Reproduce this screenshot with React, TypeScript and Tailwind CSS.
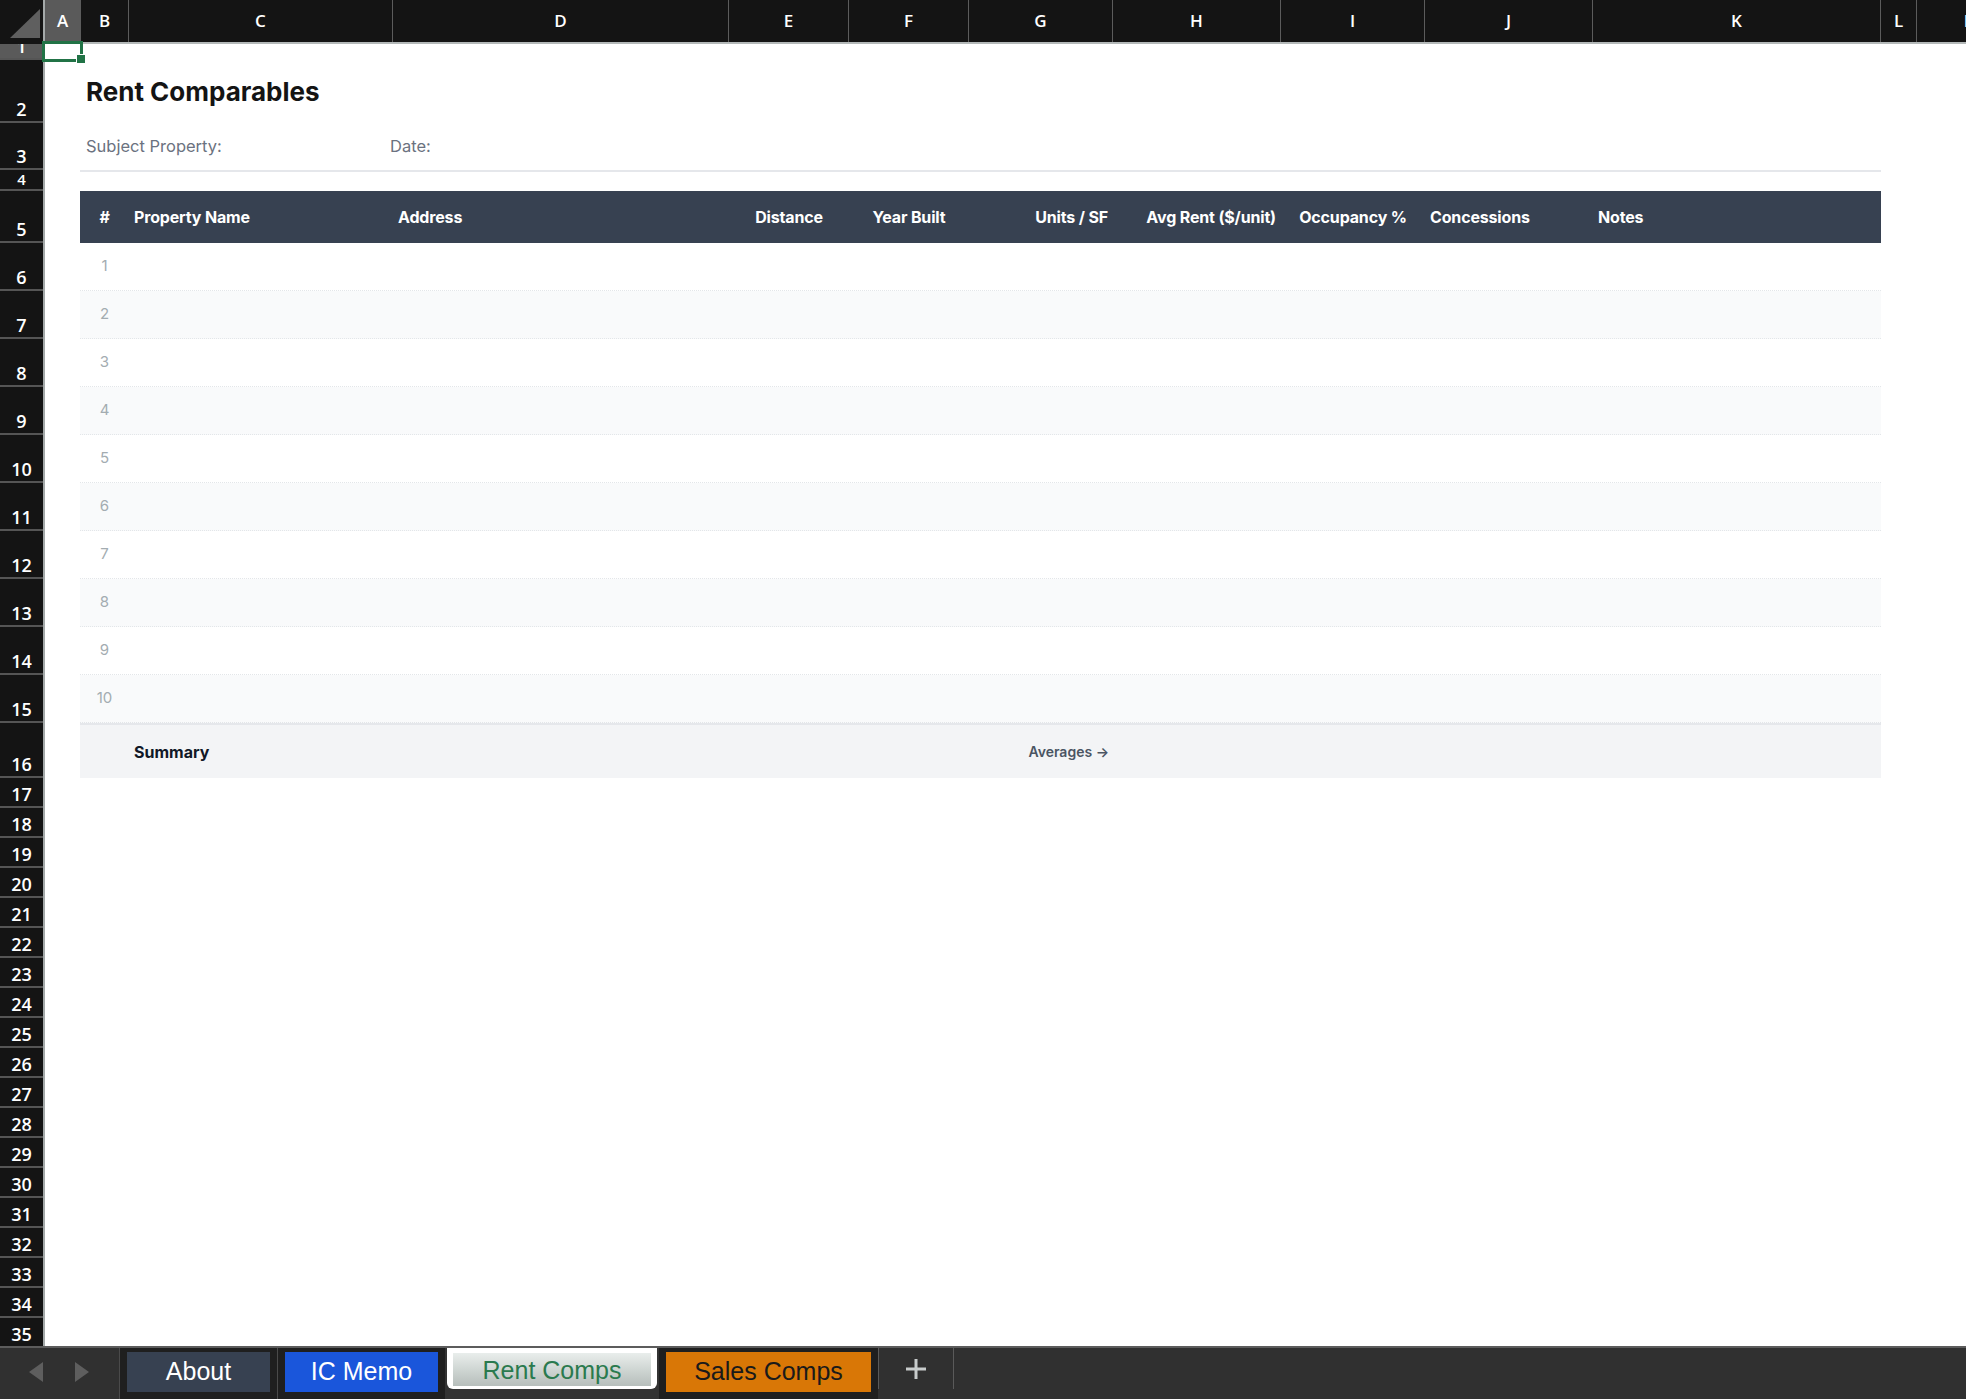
import React from "react";

const COLS = [
  { l: "A", w: "w-[36px]", on: true },
  { l: "B", w: "w-[48px]" },
  { l: "C", w: "w-[264px]" },
  { l: "D", w: "w-[336px]" },
  { l: "E", w: "w-[120px]" },
  { l: "F", w: "w-[120px]" },
  { l: "G", w: "w-[144px]" },
  { l: "H", w: "w-[168px]" },
  { l: "I", w: "w-[144px]" },
  { l: "J", w: "w-[168px]" },
  { l: "K", w: "w-[288px]" },
  { l: "L", w: "w-[36px]" },
  { l: "M", w: "w-[110px]" },
];

const ROW_H = [
  "h-[16px]",
  "h-[63px]",
  "h-[47px]",
  "h-[21px]",
  "h-[52px]",
  ...Array(10).fill("h-[48px]"),
  "h-[55px]",
  ...Array(19).fill("h-[30px]"),
];

const HEADERS = [
  { t: "#", a: "justify-center" },
  { t: "Property Name", a: "justify-start" },
  { t: "Address", a: "justify-start" },
  { t: "Distance", a: "justify-center" },
  { t: "Year Built", a: "justify-center" },
  { t: "Units / SF", a: "justify-end" },
  { t: "Avg Rent ($/unit)", a: "justify-end" },
  { t: "Occupancy %", a: "justify-center" },
  { t: "Concessions", a: "justify-start" },
  { t: "Notes", a: "justify-start" },
];

const GRID =
  "grid grid-cols-[49px_264px_336px_120px_120px_144px_168px_144px_168px_288px]";

function ColumnHeader() {
  return (
    <div className="flex h-[44px] shrink-0 bg-[#141414]">
      <div className="relative w-[43px] h-[42px] bg-[#141414]">
        <svg className="absolute left-0 top-0" width="43" height="42" viewBox="0 0 43 42">
          <polygon points="40,9 40,38 10,38" fill="#5f5f5f" />
        </svg>
      </div>
      <div className="w-[2px] h-[44px] bg-[#a4a9a9]" />
      <div className="flex flex-1 border-b-2 border-[#b4b9b9] overflow-hidden">
        {COLS.map((c) => (
          <div
            key={c.l}
            className={`${c.w} shrink-0 h-[42px] flex items-center justify-center border-r border-[#5c5c5c] text-[17px] font-semibold text-white ${
              c.on ? "bg-[#5a5a5a]" : "bg-[#141414]"
            }`}
            style={{ fontFamily: '"Open Sans", sans-serif' }}
          >
            {c.l}
          </div>
        ))}
      </div>
    </div>
  );
}

function RowHeader() {
  return (
    <div className="w-[43px] shrink-0 flex flex-col overflow-hidden bg-[#141414]">
      {ROW_H.map((h, i) => (
        <div
          key={i}
          className={`${h} shrink-0 flex items-end justify-center overflow-hidden border-b-2 border-[#555555] leading-none font-semibold text-white ${
            i === 0 ? "bg-[#5a5a5a] pb-[3px] text-[18px]" : i === 3 ? "pb-[2px] text-[15px]" : "pb-[3px] text-[18px]"
          }`}
          style={{ fontFamily: '"Open Sans", sans-serif' }}
        >
          {i + 1}
        </div>
      ))}
    </div>
  );
}

function Sheet() {
  return (
    <div
      className="flex-1 flex flex-col overflow-hidden bg-white"
      style={{ fontFamily: "Inter, sans-serif" }}
    >
      <div className="h-[16px] shrink-0" />
      <div className="h-[63px] shrink-0 flex items-center pl-[41px]">
        <h1 className="text-[26px] font-bold text-[#141414] leading-none">Rent Comparables</h1>
      </div>
      <div className="h-[47px] shrink-0 ml-[35px] w-[1801px] flex items-center text-[16.5px] text-[#6b7280]">
        <span className="w-[310px] pl-[6px]">Subject Property:</span>
        <span>Date:</span>
      </div>
      <div className="h-[21px] shrink-0 ml-[35px] w-[1801px] border-t-2 border-[#e5e7eb]" />

      <div className="ml-[35px] w-[1801px]">
        <div className={`${GRID} h-[52px] bg-[#374151]`}>
          {HEADERS.map((h) => (
            <div
              key={h.t}
              className={`flex items-center ${h.a} px-[5px] text-[16px] font-bold text-white whitespace-nowrap tracking-[-0.01em]`}
            >
              {h.t}
            </div>
          ))}
        </div>

        {Array.from({ length: 10 }, (_, i) => (
          <div
            key={i}
            className={`${GRID} h-[48px] border-b border-dotted border-[#e3e6e9] ${
              i % 2 === 1 ? "bg-[#f9fafb]" : "bg-white"
            }`}
          >
            <div className="flex items-center justify-center text-[15px] text-[#a3acb1]">{i + 1}</div>
          </div>
        ))}

        <div className={`${GRID} h-[55px] bg-[#f3f4f6] border-t-2 border-[#e5e7eb]`}>
          <div />
          <div className="flex items-center px-[5px] text-[16px] font-bold text-[#111827]">Summary</div>
          <div />
          <div />
          <div />
          <div className="flex items-center justify-end px-[4px] text-[14px] font-semibold text-[#4b5563]">
            Averages →
          </div>
        </div>
      </div>
    </div>
  );
}

function TabBar() {
  return (
    <div
      className="h-[53px] shrink-0 flex bg-[#303030] border-t-2 border-[#5c5c5c]"
      style={{ fontFamily: '"Liberation Sans", Arial, sans-serif' }}
    >
      <div className="w-[120px] shrink-0 flex items-center pl-[28px] gap-[30px] pb-[4px] border-r border-[#4a4a4a]">
        <svg width="16" height="22" viewBox="0 0 16 22">
          <polygon points="15,1 15,21 1,11" fill="#5e5e5e" />
        </svg>
        <svg width="16" height="22" viewBox="0 0 16 22">
          <polygon points="1,1 1,21 15,11" fill="#5e5e5e" />
        </svg>
      </div>

      <div className="w-[158px] shrink-0 bg-[#1f1f1f] px-[7px] pt-[4px] border-r border-[#4a4a4a]">
        <div className="h-[40px] bg-[#374151] flex items-center justify-center text-[25px] text-white">About</div>
      </div>
      <div className="w-[167px] shrink-0 bg-[#1f1f1f] px-[7px] pt-[4px]">
        <div className="h-[40px] bg-[#1a56db] flex items-center justify-center text-[25px] text-white">IC Memo</div>
      </div>

      <div className="w-[214px] shrink-0 px-[2px] bg-[#333333]">
        <div className="h-[41px] bg-white rounded-b-[6px] px-[6px] pt-[5px] pb-[3px]">
          <div className="h-[33px] bg-gradient-to-b from-[#e9eeec] to-[#b6bebb] flex items-center justify-center pt-[3px] text-[25px] text-[#2a7a4e]">
            Rent Comps
          </div>
        </div>
      </div>

      <div className="w-[219px] shrink-0 bg-[#1f1f1f] px-[7px] pt-[4px]">
        <div className="h-[40px] bg-[#d97706] flex items-center justify-center text-[25px] text-[#1a1a1a]">Sales Comps</div>
      </div>

      <div className="w-[76px] shrink-0 h-[41px] flex items-center justify-center border-l border-r border-[#5a5a5a]">
        <svg width="22" height="22" viewBox="0 0 22 22">
          <rect x="9.5" y="1" width="3" height="20" fill="#c8cccc" />
          <rect x="1" y="9.5" width="20" height="3" fill="#c8cccc" />
        </svg>
      </div>
      <div className="flex-1" />
    </div>
  );
}

export default function App() {
  return (
    <div className="relative w-[1966px] h-[1399px] flex flex-col overflow-hidden bg-white">
      <ColumnHeader />
      <div className="flex flex-1 min-h-0">
        <RowHeader />
        <div className="w-[2px] shrink-0 bg-[#a4a9a9]" />
        <Sheet />
      </div>
      <TabBar />

      {/* selected cell A1 */}
      <div className="absolute left-[42px] top-[41px] w-[41px] h-[21px] border-[3px] border-[#217346]" />
      <div className="absolute left-[77px] top-[55px] w-[8px] h-[8px] bg-[#217346] outline outline-1 outline-white" />
    </div>
  );
}
